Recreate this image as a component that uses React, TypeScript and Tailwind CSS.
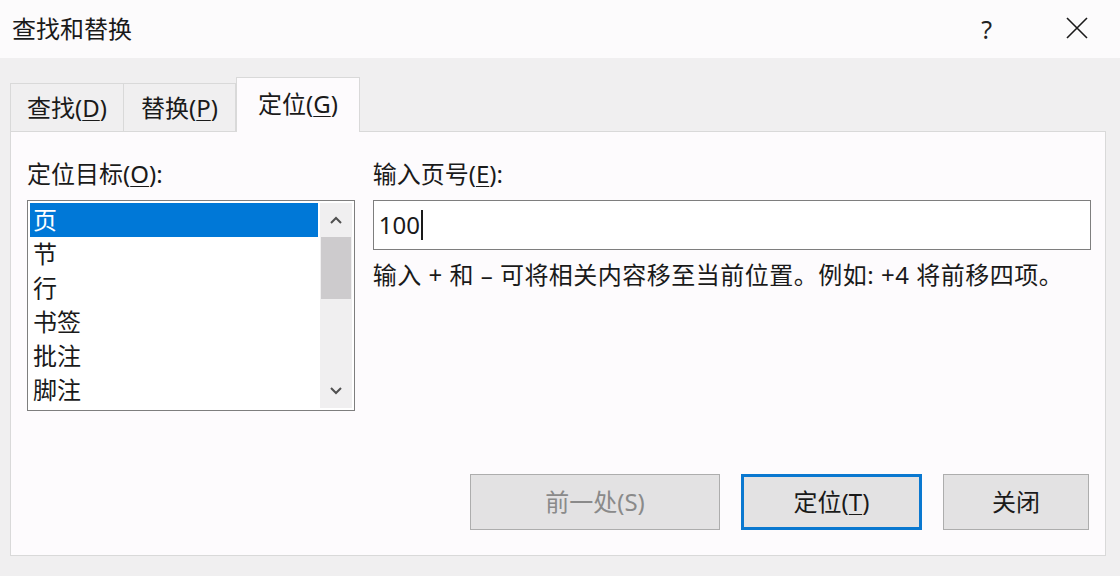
import React from "react";

const font = { fontFamily: '"Noto Sans", "Noto Sans CJK SC", sans-serif' };

function U({ children }: { children: React.ReactNode }) {
  return <span className="underline underline-offset-[3px] decoration-1">{children}</span>;
}

export default function App() {
  const items = ["页", "节", "行", "书签", "批注", "脚注"];
  return (
    <div className="w-[1120px] h-[576px] flex flex-col bg-[#f0eff0] text-[#1a1a1a] overflow-hidden" style={font}>
      {/* title bar */}
      <div className="h-[58px] bg-[#fcfbfc] flex items-center pl-[12px] pr-[32px]">
        <div className="text-[24px] leading-none flex-1">查找和替换</div>
        <div className="text-[25px] leading-none mr-[74px] text-[#222]">?</div>
        <svg width="22" height="22" viewBox="0 0 22 22" className="mb-[2px]">
          <path d="M1 1 L21 21 M21 1 L1 21" stroke="#1a1a1a" strokeWidth="1.6" fill="none" />
        </svg>
      </div>

      {/* body */}
      <div className="flex-1 flex flex-col px-[10px] pt-[19px]">
        {/* tabs */}
        <div className="flex items-end h-[54px] relative z-10">
          <div className="w-[114px] h-[48px] border border-[#d9d9d9] border-b-0 bg-[#f0eff0] flex items-center justify-center text-[24px]">
            查找(<U>D</U>)
          </div>
          <div className="w-[112px] h-[48px] border border-[#d9d9d9] border-l-0 border-b-0 bg-[#f0eff0] flex items-center justify-center text-[24px]">
            替换(<U>P</U>)
          </div>
          <div className="w-[124px] h-[55px] -mb-[1px] border border-[#d9d9d9] border-b-0 bg-[#fdfbfd] flex items-center justify-center text-[24px] pb-[3px]">
            定位(<U>G</U>)
          </div>
        </div>

        {/* panel */}
        <div className="h-[425px] w-[1096px] border border-[#d9d9d9] bg-[#fdfbfd] flex flex-col pl-[16px] pr-[14px] pt-[28px] pb-[25px]">
          <div className="flex gap-[18px]">
            {/* left column */}
            <div className="w-[328px] flex flex-col">
              <div className="text-[24px] leading-[28px] h-[28px] whitespace-nowrap">
                定位目标(<U>O</U>):
              </div>
              <div className="mt-[12px] h-[211px] border border-[#7e7e7e] bg-white flex p-[2px]">
                <div className="flex-1 flex flex-col">
                  {items.map((it, i) => (
                    <div
                      key={it}
                      className={
                        "h-[34px] flex items-center pl-[3px] text-[24px] " +
                        (i === 0 ? "bg-[#0078d7] text-white" : "text-[#1a1a1a]")
                      }
                    >
                      {it}
                    </div>
                  ))}
                </div>
                <div className="w-[32px] ml-[2px] bg-[#f0eff0] flex flex-col">
                  <div className="h-[34px] flex items-center justify-center">
                    <svg width="12" height="8" viewBox="0 0 12 8">
                      <path d="M1 7 L6 2 L11 7" stroke="#505050" strokeWidth="2" fill="none" />
                    </svg>
                  </div>
                  <div className="h-[62px] mx-[1px] bg-[#cdcbcd]" />
                  <div className="flex-1" />
                  <div className="h-[34px] flex items-center justify-center">
                    <svg width="12" height="8" viewBox="0 0 12 8">
                      <path d="M1 1 L6 6 L11 1" stroke="#505050" strokeWidth="2" fill="none" />
                    </svg>
                  </div>
                </div>
              </div>
            </div>

            {/* right column */}
            <div className="w-[719px] flex flex-col">
              <div className="text-[24px] leading-[28px] h-[28px] whitespace-nowrap">
                输入页号(<U>E</U>):
              </div>
              <div className="mt-[12px] h-[50px] border border-[#7e7e7e] bg-white flex items-center pl-[5px] text-[24px]">
                <span>100</span>
                <span className="w-[2px] h-[30px] bg-[#1a1a1a] ml-[1px]" />
              </div>
              <div className="mt-[11px] text-[24px] leading-[28px] whitespace-nowrap tracking-[0.5px]">
                输入 + 和 – 可将相关内容移至当前位置。例如: +4 将前移四项。
              </div>
            </div>
          </div>

          <div className="flex-1" />

          {/* buttons */}
          <div className="flex justify-end items-center gap-[21px] pr-[2px]">
            <div className="w-[250px] h-[56px] border border-[#adadad] bg-[#e3e2e3] flex items-center justify-center text-[24px] text-[#8a8a8a]">
              前一处(S)
            </div>
            <div className="w-[181px] h-[56px] border-[3px] border-[#0a78d0] bg-[#e3e2e3] flex items-center justify-center text-[24px]">
              定位(<U>T</U>)
            </div>
            <div className="w-[146px] h-[56px] border border-[#adadad] bg-[#e3e2e3] flex items-center justify-center text-[24px]">
              关闭
            </div>
          </div>
        </div>
      </div>
    </div>
  );
}
